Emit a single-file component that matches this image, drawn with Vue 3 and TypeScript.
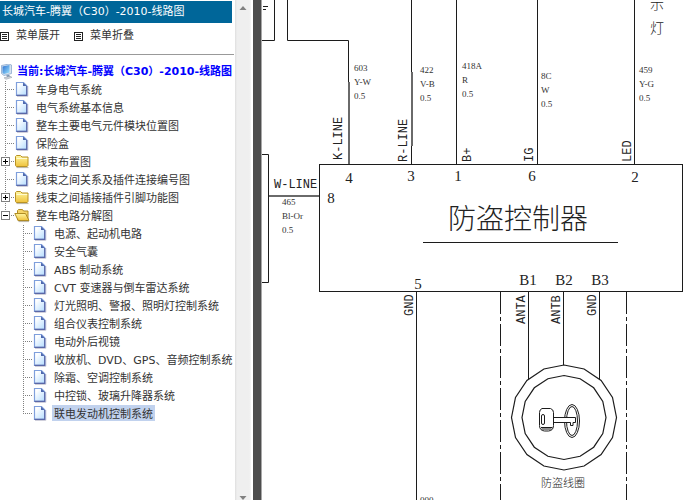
<script setup lang="ts">
import { computed, ref } from 'vue'

interface Item {
  title: string
  children?: Item[]
}
interface Row {
  title: string
  level: number
  kind: 'page' | 'folder'
  last: boolean
}
interface Label {
  x: number
  y: number
  text: string
}

const caption = '长城汽车-腾翼（C30）-2010-线路图'

const items: Item[] = [
  { title: '车身电气系统' },
  { title: '电气系统基本信息' },
  { title: '整车主要电气元件模块位置图' },
  { title: '保险盒' },
  { title: '线束布置图', children: [] },
  { title: '线束之间关系及插件连接编号图' },
  { title: '线束之间插接插件引脚功能图', children: [] },
  {
    title: '整车电路分解图',
    children: [
      { title: '电源、起动机电路' },
      { title: '安全气囊' },
      { title: 'ABS 制动系统' },
      { title: 'CVT 变速器与倒车雷达系统' },
      { title: '灯光照明、警报、照明灯控制系统' },
      { title: '组合仪表控制系统' },
      { title: '电动外后视镜' },
      { title: '收放机、DVD、GPS、音频控制系统' },
      { title: '除霜、空调控制系统' },
      { title: '中控锁、玻璃升降器系统' },
      { title: '联电发动机控制系统' },
    ],
  },
]

const opened = ref<string[]>(['整车电路分解图'])
const selected = ref('联电发动机控制系统')

const rows = computed<Row[]>(() => {
  const out: Row[] = []
  const walk = (list: Item[], level: number) => {
    list.forEach((item, i) => {
      out.push({
        title: item.title,
        level,
        kind: item.children ? 'folder' : 'page',
        last: i === list.length - 1,
      })
      if (item.children && opened.value.includes(item.title)) walk(item.children, level + 1)
    })
  }
  walk(items, 1)
  return out
})

function toggle(title: string) {
  opened.value = opened.value.includes(title)
    ? opened.value.filter((t) => t !== title)
    : [...opened.value, title]
}
function expandAll() {
  opened.value = items.filter((i) => i.children).map((i) => i.title)
}
function collapseAll() {
  opened.value = []
}

const wireNotes: Label[] = [
  { x: 354, y: 71, text: '603' },
  { x: 354, y: 85, text: 'Y-W' },
  { x: 354, y: 99, text: '0.5' },
  { x: 420, y: 73, text: '422' },
  { x: 420, y: 87, text: 'V-B' },
  { x: 420, y: 101, text: '0.5' },
  { x: 462, y: 69, text: '418A' },
  { x: 462, y: 83, text: 'R' },
  { x: 462, y: 97, text: '0.5' },
  { x: 541, y: 79, text: '8C' },
  { x: 541, y: 93, text: 'W' },
  { x: 541, y: 107, text: '0.5' },
  { x: 639, y: 73, text: '459' },
  { x: 639, y: 87, text: 'Y-G' },
  { x: 639, y: 101, text: '0.5' },
  { x: 282, y: 205, text: '465' },
  { x: 282, y: 219, text: 'Bl-Or' },
  { x: 282, y: 233, text: '0.5' },
  { x: 420, y: 503, text: '000' },
]
const pins: Label[] = [
  { x: 349, y: 183, text: '4' },
  { x: 411, y: 181, text: '3' },
  { x: 458, y: 181, text: '1' },
  { x: 532, y: 181, text: '6' },
  { x: 635, y: 182, text: '2' },
  { x: 331, y: 203, text: '8' },
  { x: 418, y: 289, text: '5' },
  { x: 528, y: 285, text: 'B1' },
  { x: 564, y: 285, text: 'B2' },
  { x: 600, y: 285, text: 'B3' },
]
const upright: Label[] = [
  { x: 342, y: 160, text: 'K-LINE' },
  { x: 407, y: 162, text: 'R-LINE' },
  { x: 471, y: 162, text: 'B+' },
  { x: 533, y: 162, text: 'IG' },
  { x: 631, y: 162, text: 'LED' },
  { x: 413, y: 316, text: 'GND' },
  { x: 525, y: 324, text: 'ANTA' },
  { x: 560, y: 324, text: 'ANTB' },
  { x: 596, y: 316, text: 'GND' },
]

function ring(radius: number): string {
  return Array.from({ length: 16 }, (_, i) => {
    const a = (i * Math.PI) / 8
    return `${(564 + radius * Math.sin(a)).toFixed(1)},${(417.5 - radius * Math.cos(a)).toFixed(1)}`
  }).join(' ')
}
const outerRing = ring(52.5)
const innerRing = ring(42)
</script>

<template>
  <div class="viewer">
    <svg class="defs" aria-hidden="true">
      <defs>
        <linearGradient id="paper" x1="0" y1="0" x2="1" y2="1">
          <stop offset="0.2" stop-color="#ffffff" />
          <stop offset="1" stop-color="#b4dcff" />
        </linearGradient>
        <linearGradient id="gold" x1="0" y1="0" x2="0" y2="1">
          <stop offset="0" stop-color="#fff6a0" />
          <stop offset="1" stop-color="#efc23c" />
        </linearGradient>
        <linearGradient id="screen" x1="0" y1="0" x2="1" y2="1">
          <stop offset="0" stop-color="#2d6fd0" />
          <stop offset="1" stop-color="#9be4ff" />
        </linearGradient>
      </defs>
    </svg>

    <aside class="side">
      <h1 class="caption">{{ caption }}</h1>
      <div class="tools">
        <button type="button" class="tool" @click="expandAll">
          <svg class="list-icon" viewBox="0 0 9 9"><rect x=".5" y=".5" width="8" height="8" /><path d="M2 2.5h5M2 4.5h5M2 6.5h5" /></svg>
          菜单展开
        </button>
        <button type="button" class="tool" @click="collapseAll">
          <svg class="list-icon" viewBox="0 0 9 9"><rect x=".5" y=".5" width="8" height="8" /><path d="M2 2.5h5M2 4.5h5M2 6.5h5" /></svg>
          菜单折叠
        </button>
      </div>
      <nav class="tree">
        <a class="root" href="#root">
          <svg class="icon" viewBox="0 0 16 16">
            <path d="M1.500 1.500 9 0l2.500 1v8.500L4 11.500 1.500 9.500z" fill="#d7e2ef" stroke="#7e9fc7" stroke-width=".7" />
            <path d="M2.500 2.500 9.500 1v7.500L4 10 2.500 9z" fill="url(#screen)" />
            <path d="M6 11.500 9 10.700l1.500 2-3 .8z" fill="#7d94b0" />
            <path d="M4 13.800 10 12.300l2 1L6 15.300z" fill="#d3d7dd" stroke="#9aa3af" stroke-width=".6" />
          </svg>
          <span>当前:{{ caption }}</span>
        </a>
        <ul class="rows">
          <li v-for="row in rows" :key="row.title" class="row">
            <span v-for="n in row.level - 1" :key="n" class="indent"></span>
            <span class="joint" :class="{ last: row.last }">
              <button
                v-if="row.kind === 'folder'"
                type="button"
                class="toggle"
                :aria-label="row.title"
                :aria-expanded="opened.includes(row.title)"
                @click="toggle(row.title)"
              >
                <svg viewBox="0 0 9 9">
                  <rect x=".5" y=".5" width="8" height="8" fill="#fff" stroke="#808080" />
                  <path :d="opened.includes(row.title) ? 'M2 4.5h5' : 'M2 4.5h5M4.500 2v5'" stroke="#000" />
                </svg>
              </button>
            </span>
            <svg v-if="row.kind === 'page'" class="icon" viewBox="0 0 16 16">
              <path d="M3 15.300h10.800V5" fill="none" stroke="#c4c4d2" />
              <path d="M2.500 1.500h7l3.200 3.200v9.600H2.500z" fill="url(#paper)" stroke="#7f9fdc" stroke-width="1.200" />
              <path d="M12.700 5v9.300H2.500" fill="none" stroke="#5a68a8" stroke-width="1.200" />
              <path d="M9 1.500v3.500h3.700z" fill="#4e68ae" />
            </svg>
            <svg v-else-if="opened.includes(row.title)" class="icon" viewBox="0 0 16 16">
              <path d="M3.500 13V3.500l1-1h4l1 1.500h4.500V13z" fill="#f5d467" stroke="#b08c24" />
              <path d="M.8 6.500h10.700l3.500 7H4.200z" fill="url(#gold)" stroke="#b08c24" />
              <path d="M4.500 14.600H15" stroke="#b9b3a2" />
            </svg>
            <svg v-else class="icon" viewBox="0 0 16 16">
              <path d="M1.500 12.500v-9l1-1h4l1.500 1.500h6v8.500l-.8 1H2.300z" fill="url(#gold)" stroke="#b99224" />
              <path d="M2.500 5.500h10.700" stroke="#fffbd0" />
              <path d="M2.500 14.600H14.500" stroke="#b9b3a2" />
            </svg>
            <a
              class="link"
              :class="{ selected: selected === row.title }"
              href="#page"
              @click.prevent="selected = row.title"
            >{{ row.title }}</a>
          </li>
        </ul>
      </nav>
    </aside>

    <div class="scroll" aria-hidden="true">
      <svg class="arrow" viewBox="0 0 8 4"><path d="M4 0 7.500 4H.5z" /></svg>
      <svg class="arrow" viewBox="0 0 8 4"><path d="M.5 0h7L4 4z" /></svg>
    </div>
    <div class="divider"></div>

    <main class="sheet">
      <svg class="diagram" viewBox="262 0 438 500" preserveAspectRatio="xMinYMin meet" role="img" aria-label="防盗控制器">
        <g class="wire">
          <path d="M274.500 0V40.500H262M263 6.500h5M263 9.500h3" />
          <path d="M287.500 0V40.500H348.500V164" />
          <path d="M411.500 0V164M456.500 0V164M537.500 0V164M634.500 0V164" />
          <path d="M262 154.500h6.500v128H262" />
          <rect x="319.500" y="164.500" width="363" height="127" />
          <path d="M423 242.500H618" />
          <path d="M416.500 292V500M528.500 292V379M563.500 292V365M599.500 292V379" />
          <path class="dashed" d="M500.500 292V500M626.500 292V500" />
          <polygon :points="outerRing" />
          <polygon :points="innerRing" />
        </g>
        <g class="heavy">
          <path d="M349 82V164M412 72V146M269 196H319" />
        </g>
        <g class="key">
          <ellipse cx="572" cy="421" rx="7.500" ry="16.500" />
          <ellipse cx="572" cy="421" rx="5.500" ry="14.500" />
          <path class="filled" d="M553 417.500h22.500v5H573v3h-2.500v-3H553z" />
          <path class="filled" d="M542 408.500h8.500q3 1 3 4v13q0 5-5 5.500h-4q-5-.5-5-5.500v-13q0-3 2.500-4z" />
          <path d="M541 427.500h11.500M541.500 429h10" />
          <rect x="541.500" y="414.500" width="3" height="10" rx="1.500" />
        </g>
        <g class="note">
          <text v-for="(t, i) in wireNotes" :key="i" :x="t.x" :y="t.y">{{ t.text }}</text>
        </g>
        <g class="pin">
          <text v-for="t in pins" :key="t.text" :x="t.x" :y="t.y">{{ t.text }}</text>
        </g>
        <g class="name">
          <text x="274" y="188">W-LINE</text>
          <text v-for="(t, i) in upright" :key="i" :transform="`translate(${t.x} ${t.y}) rotate(-90)`">{{ t.text }}</text>
        </g>
        <g class="hanzi">
          <text class="title" x="448" y="229">防盗控制器</text>
          <text class="lamp" x="650" y="9">示</text>
          <text class="lamp" x="650" y="33">灯</text>
          <text class="coil" x="541" y="487">防盗线圈</text>
        </g>
      </svg>
    </main>
  </div>
</template>

<style>
body {
  background: #fff;
  overflow: hidden;
}
</style>

<style scoped>
.viewer {
  display: flex;
  height: 100vh;
  font: 11px/18px 'DejaVu Sans', 'Noto Sans CJK SC', sans-serif;
  color: #333;
}
.defs {
  position: absolute;
  width: 0;
  height: 0;
}
.side {
  flex: none;
  width: 235px;
  position: relative;
  z-index: 1;
}
.caption {
  margin: 1px 3px 0 0;
  padding: 0 2px;
  font-size: 11px;
  font-weight: 400;
  line-height: 22px;
  white-space: nowrap;
  color: #fff;
  background: #069;
}
.tools {
  display: flex;
  gap: 14px;
  height: 32px;
  padding: 4px 0 0 0;
  box-sizing: border-box;
  margin-right: 1px;
  border-bottom: 1px solid #999;
}
.tool {
  display: flex;
  align-items: center;
  gap: 7px;
  height: 18px;
  padding: 0;
  border: 0;
  background: none;
  font: inherit;
  color: inherit;
}
.list-icon {
  width: 9px;
  height: 9px;
  fill: #fff;
  stroke: #222;
}
.tree {
  padding-top: 8px;
}
.root {
  display: flex;
  align-items: center;
  gap: 1px;
  height: 18px;
  line-height: 20px;
  font-weight: 700;
  color: #00f;
  text-decoration: none;
  white-space: nowrap;
}
.icon {
  flex: none;
  width: 16px;
  height: 16px;
}
.rows {
  margin: 0;
  padding: 0;
  list-style: none;
  overflow: hidden;
}
.row {
  display: flex;
  height: 18px;
  white-space: nowrap;
}
.indent {
  flex: none;
  width: 18px;
}
.joint {
  flex: none;
  width: 14px;
  padding: 4px 0 0 1px;
  box-sizing: border-box;
  background-image:
    repeating-linear-gradient(to bottom, #808080 0 1px, transparent 1px 2px),
    repeating-linear-gradient(to right, #808080 0 1px, transparent 1px 2px);
  background-size: 1px 100%, 10px 1px;
  background-position: 5px 0, 5px 8px;
  background-repeat: no-repeat;
}
.joint.last {
  background-size: 1px 8px, 10px 1px;
}
.toggle {
  display: block;
  width: 9px;
  height: 9px;
  padding: 0;
  border: 0;
  background: none;
}
.toggle svg {
  display: block;
}
.link {
  height: 16px;
  margin-left: 4px;
  padding: 0 2px;
  line-height: 20px;
  color: inherit;
  text-decoration: none;
}
.selected {
  background: #c1d2ee;
}
.scroll {
  flex: none;
  width: 16px;
  display: flex;
  flex-direction: column;
  justify-content: space-between;
  align-items: center;
  padding: 6px 0 0;
  box-sizing: border-box;
  background: linear-gradient(to right, #dedede, #efefef 2px, #efefef 14px, #f5f5f5);
}
.arrow {
  width: 8px;
  height: 4px;
  fill: #808080;
}
.divider {
  flex: none;
  width: 8px;
  margin-left: 2px;
  background: #4d4d4d;
  border-right: 1px solid #a8a8a8;
}
.sheet {
  flex: 1;
  min-width: 0;
}
.diagram {
  display: block;
  width: 100%;
}
.wire {
  fill: none;
  stroke: #1c1c1c;
}
.wire polygon {
  stroke-width: 1.200px;
}
.dashed {
  stroke-dasharray: 22 3 4 3;
}
.heavy {
  stroke: #6a6a6a;
  stroke-width: 2px;
}
.key {
  fill: none;
  stroke: #1c1c1c;
}
.filled {
  fill: #fff;
}
.note {
  font: 9px 'Liberation Serif', serif;
  fill: #333;
}
.pin {
  font: 15px 'Liberation Serif', serif;
  text-anchor: middle;
  fill: #222;
}
.name {
  font: 12px 'Liberation Mono', monospace;
  fill: #222;
}
.hanzi {
  font-family: 'Noto Sans CJK SC', sans-serif;
  font-weight: 300;
  fill: #222;
}
.title {
  font-size: 28px;
}
.lamp {
  font-size: 14px;
}
.coil {
  font-size: 11px;
}
</style>
